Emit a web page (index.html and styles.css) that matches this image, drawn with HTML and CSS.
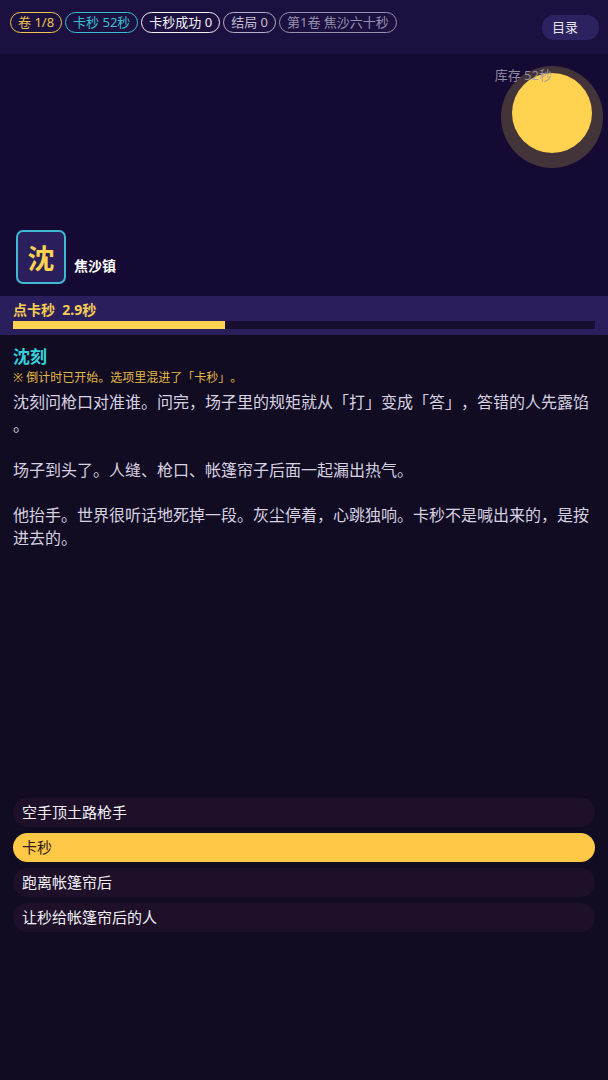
FILE: index.html
```html
<!DOCTYPE html>
<html lang="zh-CN">

<head>
    <meta charset="UTF-8">
    <meta name="viewport" content="width=device-width, initial-scale=1.0">
    <title>焦沙六十秒</title>
    <link rel="stylesheet" href="styles.css">
</head>

<body>

    <!-- Status bar -->
    <header class="topbar">
        <div class="tags">
            <span class="tag gold">卷 1/8</span>
            <span class="tag cyan">卡秒 52秒</span>
            <span class="tag white">卡秒成功 0</span>
            <span class="tag">结局 0</span>
            <span class="tag dim">第1卷 焦沙六十秒</span>
        </div>
        <button type="button" class="menu">目录</button>
    </header>

    <!-- Scene -->
    <section class="scene">
        <div class="sun"></div>
        <span class="stock">库存 52秒</span>
        <div class="avatar">沈</div>
        <span class="place">焦沙镇</span>
    </section>

    <!-- Countdown -->
    <section class="timer">
        <div class="timer-label">点卡秒&nbsp; 2.9秒</div>
        <div class="bar">
            <div class="bar-fill" style="width: 36.4%"></div>
        </div>
    </section>

    <main class="dialog">
        <h2>沈刻</h2>
        <p class="note">※ 倒计时已开始。选项里混进了「卡秒」。</p>
        <div class="story">
            <p>沈刻问枪口对准谁。问完，场子里的规矩就从「打」变成「答」，答错的人先露馅。</p>
            <p>场子到头了。人缝、枪口、帐篷帘子后面一起漏出热气。</p>
            <p>他抬手。世界很听话地死掉一段。灰尘停着，心跳独响。卡秒不是喊出来的，是按进去的。</p>
        </div>
    </main>

    <!-- Choices -->
    <nav class="choices">
        <button type="button" class="choice">空手顶土路枪手</button>
        <button type="button" class="choice active">卡秒</button>
        <button type="button" class="choice">跑离帐篷帘后</button>
        <button type="button" class="choice">让秒给帐篷帘后的人</button>
    </nav>

</body>

</html>
```
FILE: styles.css
```css
* {
    box-sizing: border-box;
}
body {
    display: flex;
    flex-direction: column;
    min-height: 100vh;
    margin: 0;
    background-color: #120c22;
    color: #d6d2e2;
    font-family: "Noto Sans", "Noto Sans CJK SC", sans-serif;
    font-size: 16px;
    text-spacing-trim: space-all;
}
h2, p {
    margin: 0;
}
button {
    border: none;
    font-family: inherit;
    text-align: left;
    cursor: pointer;
}

/* status bar */
.topbar {
    display: flex;
    justify-content: space-between;
    align-items: flex-start;
    height: 54px;
    padding: 12px 9px 12px 10px;
    background-color: #1b1040;
}
.tags {
    display: flex;
    gap: 3px;
}
.tag {
    padding: 0 7px;
    border: 1px solid #b5afc8;
    border-radius: 11px;
    color: #c3bed2;
    font-size: 13px;
    line-height: 19px;
    white-space: nowrap;
}
.gold {
    border-color: #f0c650;
    color: #ecc350;
}
.cyan {
    border-color: #38bfd2;
    color: #38bfd2;
}
.white {
    border-color: #f4f2f8;
    color: #f4f2f8;
}
.dim {
    border-color: #9790ae;
    color: #9790ae;
}
.menu {
    width: 57px;
    margin-top: 3px;
    padding: 0 10px;
    border-radius: 12px;
    background-color: #2d2260;
    color: #e8e5f0;
    font-size: 13px;
    line-height: 25px;
}

/* scene */
.scene {
    position: relative;
    display: flex;
    align-items: flex-end;
    gap: 8px;
    height: 242px;
    padding: 12px 16px;
    background-color: #150a33;
}
.sun {
    position: absolute;
    top: 12px;
    right: 5px;
    width: 102px;
    height: 102px;
    border-radius: 50%;
    background-color: #43343a;
}
.sun::after {
    content: "";
    position: absolute;
    top: 7px;
    left: 11px;
    width: 80px;
    height: 80px;
    border-radius: 50%;
    background-color: #ffd34f;
}
.stock {
    position: absolute;
    top: 12px;
    right: 56px;
    color: rgba(160, 154, 176, 0.9);
    font-size: 13px;
    line-height: 19px;
}
.avatar {
    width: 50px;
    height: 54px;
    border: 2px solid #3fb9d0;
    border-radius: 7px;
    background-color: #2a1f5c;
    color: #ffd34f;
    font-size: 27px;
    font-weight: bold;
    line-height: 54px;
    text-align: center;
}
.place {
    margin-bottom: 8px;
    color: #fff;
    font-size: 14px;
    font-weight: bold;
    line-height: 20px;
}

/* countdown */
.timer {
    height: 39px;
    padding: 4px 13px;
    background-color: #2a1f5c;
}
.timer-label {
    margin-bottom: 1px;
    color: #f5cc54;
    font-size: 14px;
    font-weight: bold;
    line-height: 20px;
}
.bar {
    height: 8px;
    background-color: #180f30;
}
.bar-fill {
    height: 100%;
    background-color: #ffd34f;
}

/* dialog */
.dialog {
    flex: 1;
    padding: 10px 13px;
}
.dialog h2 {
    color: #35d0de;
    font-size: 17px;
    line-height: 23px;
}
.note {
    color: #e2b848;
    font-size: 12px;
    line-height: 19px;
}
.story {
    display: flex;
    flex-direction: column;
    gap: 22px;
    margin-top: 4px;
    line-height: 23px;
    line-break: anywhere;
}

/* choices */
.choices {
    display: flex;
    flex-direction: column;
    gap: 6px;
    padding: 0 13px 148px;
}
.choice {
    padding: 0 9px;
    border-radius: 15px;
    background-color: #1d1028;
    color: #f1eff5;
    font-size: 15px;
    line-height: 29px;
}
.choice.active {
    background-color: #ffc846;
    color: #2c1a1c;
}
```
